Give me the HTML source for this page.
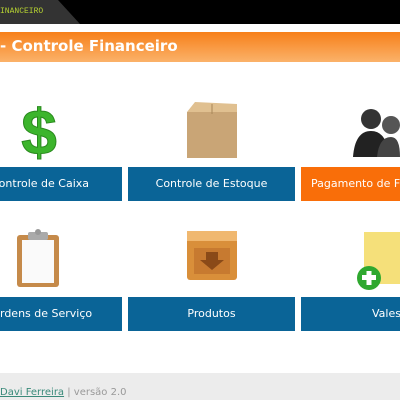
<!DOCTYPE html>
<html><head><style>
body{margin:0;width:400px;height:400px;overflow:hidden;background:#fff;font-family:"DejaVu Sans","Liberation Sans",sans-serif;position:relative}
.top{position:absolute;left:0;top:0;width:400px;height:24px;background:#000}
.tab{position:absolute;left:0;top:0;width:80px;height:24px;background:#333;clip-path:polygon(0 0,58px 0,80px 24px,0 24px)}
.tab span{position:absolute;left:0;top:7px;font-size:8px;color:#b6d232;font-family:"Liberation Mono",monospace}
.bar{position:absolute;left:0;top:32px;width:400px;height:30px;background:linear-gradient(#f7801a,#fbb26a);color:#fff;font-size:15px;font-weight:bold;line-height:28px}
.btn{position:absolute;height:34px;background:#0a6497;color:#fff;font-size:11px;text-align:center;line-height:33px;white-space:nowrap;overflow:hidden}
.foot{position:absolute;left:0;top:373px;width:400px;height:27px;background:#ececec;font-size:10px;color:#999;line-height:40px}
.foot a{color:#3a8a7a;text-decoration:underline}
</style></head><body>
<div class="top"></div><div class="tab"><span>INANCEIRO</span></div>
<div class="bar">- Controle Financeiro</div>
<svg style="position:absolute;left:18px;top:100px" width="42" height="60" viewBox="0 0 42 60"><text x="21" y="54" text-anchor="middle" font-size="64" font-weight="bold" fill="#3cb52c" stroke="#2a8a1e" stroke-width="1" font-family="Liberation Sans">$</text></svg>
<svg style="position:absolute;left:185px;top:100px" width="55" height="60"><polygon points="2,12 10,2 52,4 52,14" fill="#e0c090"/><rect x="2" y="12" width="50" height="46" fill="#c9a576"/><line x1="27" y1="4" x2="27" y2="14" stroke="#a88658"/></svg>
<svg style="position:absolute;left:353px;top:105px" width="47" height="52"><circle cx="18" cy="14" r="10" fill="#333"/><path d="M0 52 Q2 26 18 26 Q34 26 36 52Z" fill="#222"/><circle cx="38" cy="20" r="9" fill="#555"/><path d="M24 52 Q26 32 38 32 Q47 32 47 52Z" fill="#444"/></svg>
<svg style="position:absolute;left:16px;top:228px" width="45" height="60"><rect x="1" y="7" width="42" height="52" rx="3" fill="#c58a4a"/><rect x="6" y="12" width="32" height="43" fill="#fafafa"/><rect x="12" y="4" width="20" height="8" rx="2" fill="#aaa"/><circle cx="22" cy="4" r="3" fill="#999"/></svg>
<svg style="position:absolute;left:186px;top:230px" width="52" height="52"><rect x="1" y="8" width="50" height="42" rx="3" fill="#d98f3a"/><rect x="1" y="1" width="50" height="10" fill="#f0b870"/><rect x="8" y="18" width="36" height="26" fill="#c77a30"/><polygon points="20,22 32,22 32,30 38,30 26,40 14,30 20,30" fill="#8a4a18"/></svg>
<svg style="position:absolute;left:355px;top:232px" width="45" height="60"><rect x="9" y="0" width="36" height="52" fill="#f5e07a"/><circle cx="14" cy="46" r="12" fill="#2fa82f"/><rect x="7" y="43" width="14" height="5" fill="#fff"/><rect x="11.5" y="39" width="5" height="14" fill="#fff"/></svg>
<div class="btn" style="left:0;top:167px;width:122px;text-align:left;text-indent:-9px">Controle de Caixa</div>
<div class="btn" style="left:128px;top:167px;width:167px">Controle de Estoque</div>
<div class="btn" style="left:301px;top:167px;width:99px;background:#f96e09;text-align:left;padding-left:10px">Pagamento de Fu</div>
<div class="btn" style="left:0;top:297px;width:122px;text-align:left">rdens de Serviço</div>
<div class="btn" style="left:128px;top:297px;width:167px">Produtos</div>
<div class="btn" style="left:301px;top:297px;width:99px;text-align:left;padding-left:71px">Vales</div>
<div class="foot"><a>Davi Ferreira</a> | versão 2.0</div>
</body></html>
